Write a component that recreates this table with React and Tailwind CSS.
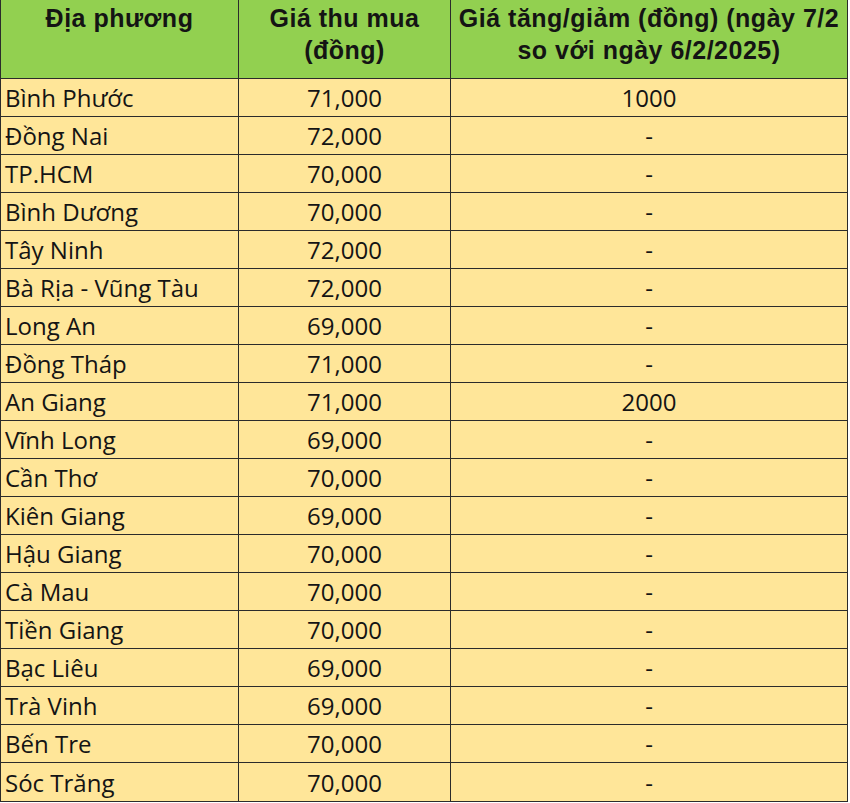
import React from "react";

const rows = [
  ["Bình Phước", "71,000", "1000"],
  ["Đồng Nai", "72,000", "-"],
  ["TP.HCM", "70,000", "-"],
  ["Bình Dương", "70,000", "-"],
  ["Tây Ninh", "72,000", "-"],
  ["Bà Rịa - Vũng Tàu", "72,000", "-"],
  ["Long An", "69,000", "-"],
  ["Đồng Tháp", "71,000", "-"],
  ["An Giang", "71,000", "2000"],
  ["Vĩnh Long", "69,000", "-"],
  ["Cần Thơ", "70,000", "-"],
  ["Kiên Giang", "69,000", "-"],
  ["Hậu Giang", "70,000", "-"],
  ["Cà Mau", "70,000", "-"],
  ["Tiền Giang", "70,000", "-"],
  ["Bạc Liêu", "69,000", "-"],
  ["Trà Vinh", "69,000", "-"],
  ["Bến Tre", "70,000", "-"],
  ["Sóc Trăng", "70,000", "-"],
];

const App = () => {
  return (
    <div className="w-[850px] h-[803px] bg-white">
      <div className="w-[848px] border-l border-r border-b border-[#2b2b2b] text-[#141414]">
        {/* Header */}
        <div className="grid grid-cols-[238px_212px_1fr] h-[79px] bg-[#92d050] border-b border-[#2b2b2b] font-['Liberation_Sans',Arial,sans-serif] font-bold text-[25px] leading-[32px] tracking-[0.5px]">
          <div className="border-r border-[#2b2b2b] text-center pt-[2px]">Địa phương</div>
          <div className="border-r border-[#2b2b2b] text-center pt-[2px]">
            Giá thu mua
            <br />
            (đồng)
          </div>
          <div className="text-center pt-[2px]">
            Giá tăng/giảm (đồng) (ngày 7/2
            <br />
            so với ngày 6/2/2025)
          </div>
        </div>

        {/* Body rows */}
        {rows.map((row, index) => (
          <div
            key={row[0]}
            className={`grid grid-cols-[238px_212px_1fr] h-[38px] bg-[#ffe699] font-['Open_Sans',sans-serif] text-[24px] ${
              index < rows.length - 1 ? "border-b border-[#2b2b2b]" : ""
            }`}
          >
            <div className="border-r border-[#2b2b2b] flex items-center pl-[4px] pt-[1px]">{row[0]}</div>
            <div className="border-r border-[#2b2b2b] flex items-center justify-center pt-[1px]">{row[1]}</div>
            <div className="flex items-center justify-center pt-[1px]">{row[2]}</div>
          </div>
        ))}
      </div>
    </div>
  );
};

export default App;
